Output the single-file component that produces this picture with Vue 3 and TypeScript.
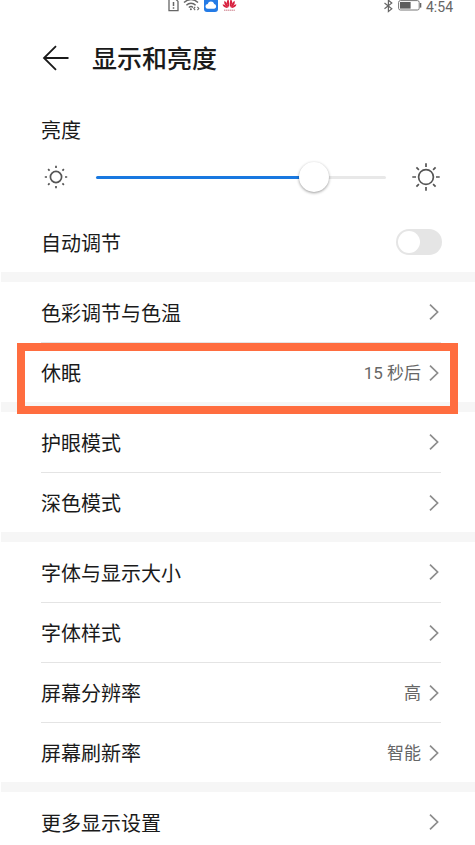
<script setup lang="ts">
import { computed, ref } from 'vue'

interface Item {
  label: string
  value?: string
  marked?: boolean
}

const brightness = ref(78)
const autoAdjust = ref(false)
const fill = computed(() => ({ '--fill': `${brightness.value}%` }))

const groups: Item[][] = [
  [{ label: '色彩调节与色温' }, { label: '休眠', value: '15 秒后', marked: true }],
  [{ label: '护眼模式' }, { label: '深色模式' }],
  [
    { label: '字体与显示大小' },
    { label: '字体样式' },
    { label: '屏幕分辨率', value: '高' },
    { label: '屏幕刷新率', value: '智能' },
  ],
  [{ label: '更多显示设置' }],
]
</script>

<template>
  <div class="screen">
    <div class="status">
      <div class="status-left">
        <svg width="11" height="14" viewBox="0 0 11 14" fill="none" stroke="#666" stroke-width="1.3">
          <path d="M1 1H7.6L10 3.4V12.6H1Z" />
          <path d="M5.5 4V8M5.5 9.3V10.8" stroke-width="1.5" />
        </svg>
        <svg width="17" height="14" viewBox="0 0 17 14" fill="none" stroke="#666" stroke-width="1.4">
          <path d="M1 4.6C5 .6 11 .6 15 4.6M3.4 7.2C6 4.6 10 4.6 12.6 7.2M5.8 9.6C7.2 8.3 8.8 8.3 10 9.4" />
          <circle cx="7.9" cy="11.2" r="1" fill="#666" stroke="none" />
          <path d="M12.2 8.8L10.8 10.5L12.2 12.2M14.4 8.8L15.8 10.5L14.4 12.2" stroke-width="1.1" />
        </svg>
        <svg width="14" height="14" viewBox="0 0 14 14">
          <rect width="14" height="14" rx="3" fill="#247be6" />
          <path d="M4 10.8A2.4 2.4 0 0 1 3.7 6A3.4 3.4 0 0 1 10.2 6A2.45 2.45 0 0 1 10.2 10.8Z" fill="#fff" />
        </svg>
        <svg width="15" height="14" viewBox="0 0 15 14" fill="#d8213f">
          <path d="M7 9.2C4.2 5.8 4.2 2.6 6.5 1.2C7.2 3.6 7.4 6.4 7 9.2Z" />
          <path d="M8 9.2C10.8 5.8 10.8 2.6 8.5 1.2C7.8 3.6 7.6 6.4 8 9.2Z" />
          <path d="M6.4 9.4C3 8 1.5 5.2 2.6 2.7C4.8 4.4 6.1 6.8 6.4 9.4Z" />
          <path d="M8.6 9.4C12 8 13.5 5.2 12.4 2.7C10.2 4.4 8.9 6.8 8.6 9.4Z" />
          <path d="M6 9.8C3.2 10.3 .8 8.8 .6 6.3C3 6.8 5 8 6 9.8Z" />
          <path d="M9 9.8C11.8 10.3 14.2 8.8 14.4 6.3C12 6.8 10 8 9 9.8Z" />
          <path d="M2 12.3H13" stroke="#dba3ab" stroke-width="1.4" stroke-dasharray="1.4 .5" />
        </svg>
      </div>
      <div class="status-right">
        <svg width="11" height="14" viewBox="0 0 11 14" fill="none" stroke="#666" stroke-width="1.2">
          <path d="M1.5 4L8.8 9.8L5.4 12.6V1.2L8.8 4L1.5 9.8" />
        </svg>
        <svg width="24" height="14" viewBox="0 0 24 14">
          <rect x=".6" y="1.6" width="20.6" height="9.4" rx="1.8" fill="#fff" stroke="#777" />
          <rect x="2" y="3" width="10.6" height="6.6" fill="#5c5c5c" />
          <path d="M22.6 4V8.6" stroke="#666" stroke-width="1.4" />
        </svg>
        <span>4:54</span>
      </div>
    </div>

    <header class="header">
      <button class="back" type="button" aria-label="返回">
        <svg width="28" height="26" viewBox="0 0 28 26" fill="none" stroke="#1a1a1a" stroke-width="1.8">
          <path d="M27.5 13H3M15 1.2L3 13L15 24.8" />
        </svg>
      </button>
      <h1>显示和亮度</h1>
    </header>

    <main>
      <section class="brightness">
        <label class="label" for="brightness">亮度</label>
        <div class="slider">
          <svg width="30" height="30" viewBox="-15 -15 30 30" fill="none" stroke="#555" stroke-width="1.7">
            <circle r="5.6" />
            <path d="M0-11.2V-9M0 11.2V9M-11.2 0H-9M11.2 0H9M-7.9-7.9L-6.4-6.4M7.9-7.9L6.4-6.4M-7.9 7.9L-6.4 6.4M7.9 7.9L6.4 6.4" />
          </svg>
          <input id="brightness" v-model.number="brightness" type="range" min="0" max="100" :style="fill" />
          <svg width="30" height="30" viewBox="-15 -15 30 30" fill="none" stroke="#555" stroke-width="1.7">
            <circle r="7.4" />
            <path d="M0-13.7V-10M0 13.7V10M-13.7 0H-10M13.7 0H10M-9.6-9.6L-7.1-7.1M9.6-9.6L7.1-7.1M-9.6 9.6L-7.1 7.1M9.6 9.6L7.1 7.1" />
          </svg>
        </div>
        <div class="row auto">
          <label class="label" for="auto">自动调节</label>
          <input id="auto" v-model="autoAdjust" class="switch" type="checkbox" role="switch" />
        </div>
      </section>

      <ul v-for="(group, g) in groups" :key="g" class="group">
        <li v-for="item in group" :key="item.label" :class="{ marked: item.marked }">
          <button class="row" type="button">
            <span class="label">{{ item.label }}</span>
            <span v-if="item.value" class="value">{{ item.value }}</span>
            <svg class="chevron" width="10" height="16" viewBox="0 0 10 16" fill="none" stroke="#8c8c8c" stroke-width="1.7">
              <path d="M1 .7L8.6 8L1 15.3" />
            </svg>
          </button>
        </li>
      </ul>
    </main>
  </div>
</template>

<style>
html {
  scrollbar-width: none;
}

body {
  margin: 0;
  background: #fff;
}
</style>

<style scoped>
.screen {
  min-height: 100vh;
  background: #fff;
  color: #1a1a1a;
  font-family: Roboto, "Noto Sans CJK SC", sans-serif;
}

.status {
  display: flex;
  justify-content: space-between;
  height: 14px;
  padding: 0 22px 0 168px;
  color: #666;
  font-size: 14px;
  line-height: 14px;
}

.status-left,
.status-right {
  display: flex;
  align-items: flex-start;
  gap: 4px;
}

.status-left svg {
  margin-top: -2px;
}

.status-right {
  gap: 4px;
}

.status-right svg {
  margin-top: -1px;
}

.header {
  display: flex;
  align-items: center;
  gap: 23px;
  height: 88px;
  padding: 0 41px;
}

.back {
  display: flex;
  padding: 0;
  border: 0;
  background: none;
}

h1 {
  margin: 0;
  padding-top: 4px;
  font-size: 25px;
  font-weight: 500;
  line-height: 36px;
}

.label {
  padding-top: 3px;
  font-size: 20px;
  line-height: 30px;
}

.brightness {
  display: flex;
  flex-direction: column;
  padding-top: 11px;
}

.brightness > .label {
  padding-right: 41px;
  padding-left: 41px;
}

.slider {
  display: flex;
  align-items: center;
  gap: 25px;
  height: 62px;
  margin-bottom: 4px;
  padding: 0 34px 0 41px;
}

.slider svg {
  flex: none;
}

.slider input {
  flex: 1;
  min-width: 0;
  height: 30px;
  margin: 0;
  appearance: none;
  background: none;
}

.slider input::-webkit-slider-runnable-track {
  height: 3px;
  border-radius: 2px;
  background: linear-gradient(to right, #1878e0 var(--fill), #e8e8e8 var(--fill));
}

.slider input::-webkit-slider-thumb {
  width: 30px;
  height: 30px;
  margin-top: -14px;
  border-radius: 50%;
  appearance: none;
  background: #fff;
  box-shadow: 0 1px 3px rgba(0, 0, 0, 0.4);
}

.row {
  display: flex;
  box-sizing: border-box;
  align-items: center;
  width: 100%;
  height: 60px;
  padding: 0;
  border: 0;
  background: none;
  color: inherit;
  font-family: inherit;
  text-align: left;
}

.auto {
  justify-content: space-between;
  padding: 0 33px 0 41px;
}

.switch {
  width: 46px;
  height: 26px;
  margin: 0;
  padding: 2px;
  border-radius: 13px;
  appearance: none;
  background: #e5e5e5;
}

.switch::before {
  display: block;
  width: 22px;
  height: 22px;
  border-radius: 50%;
  background: #fff;
  content: "";
}

.switch:checked {
  background: #1878e0;
}

.switch:checked::before {
  margin-left: 20px;
}

.group {
  margin: 0 0 0 1px;
  padding: 0;
  border-top: 10px solid #f6f6f6;
  list-style: none;
}

.group li {
  position: relative;
  padding: 0 34px 0 40px;
}

.group li + li .row {
  border-top: 1px solid #e4e4e4;
}

.value {
  margin-left: auto;
  color: #666;
  font-size: 17px;
  line-height: 30px;
}

.chevron {
  flex: none;
  margin: 0 2px 0 auto;
}

.value + .chevron {
  margin-left: 8px;
}

.marked::after {
  position: absolute;
  z-index: 1;
  top: 1px;
  right: 17px;
  bottom: -12px;
  left: 16px;
  border: 8px solid #ff6d3f;
  content: "";
  pointer-events: none;
}
</style>
